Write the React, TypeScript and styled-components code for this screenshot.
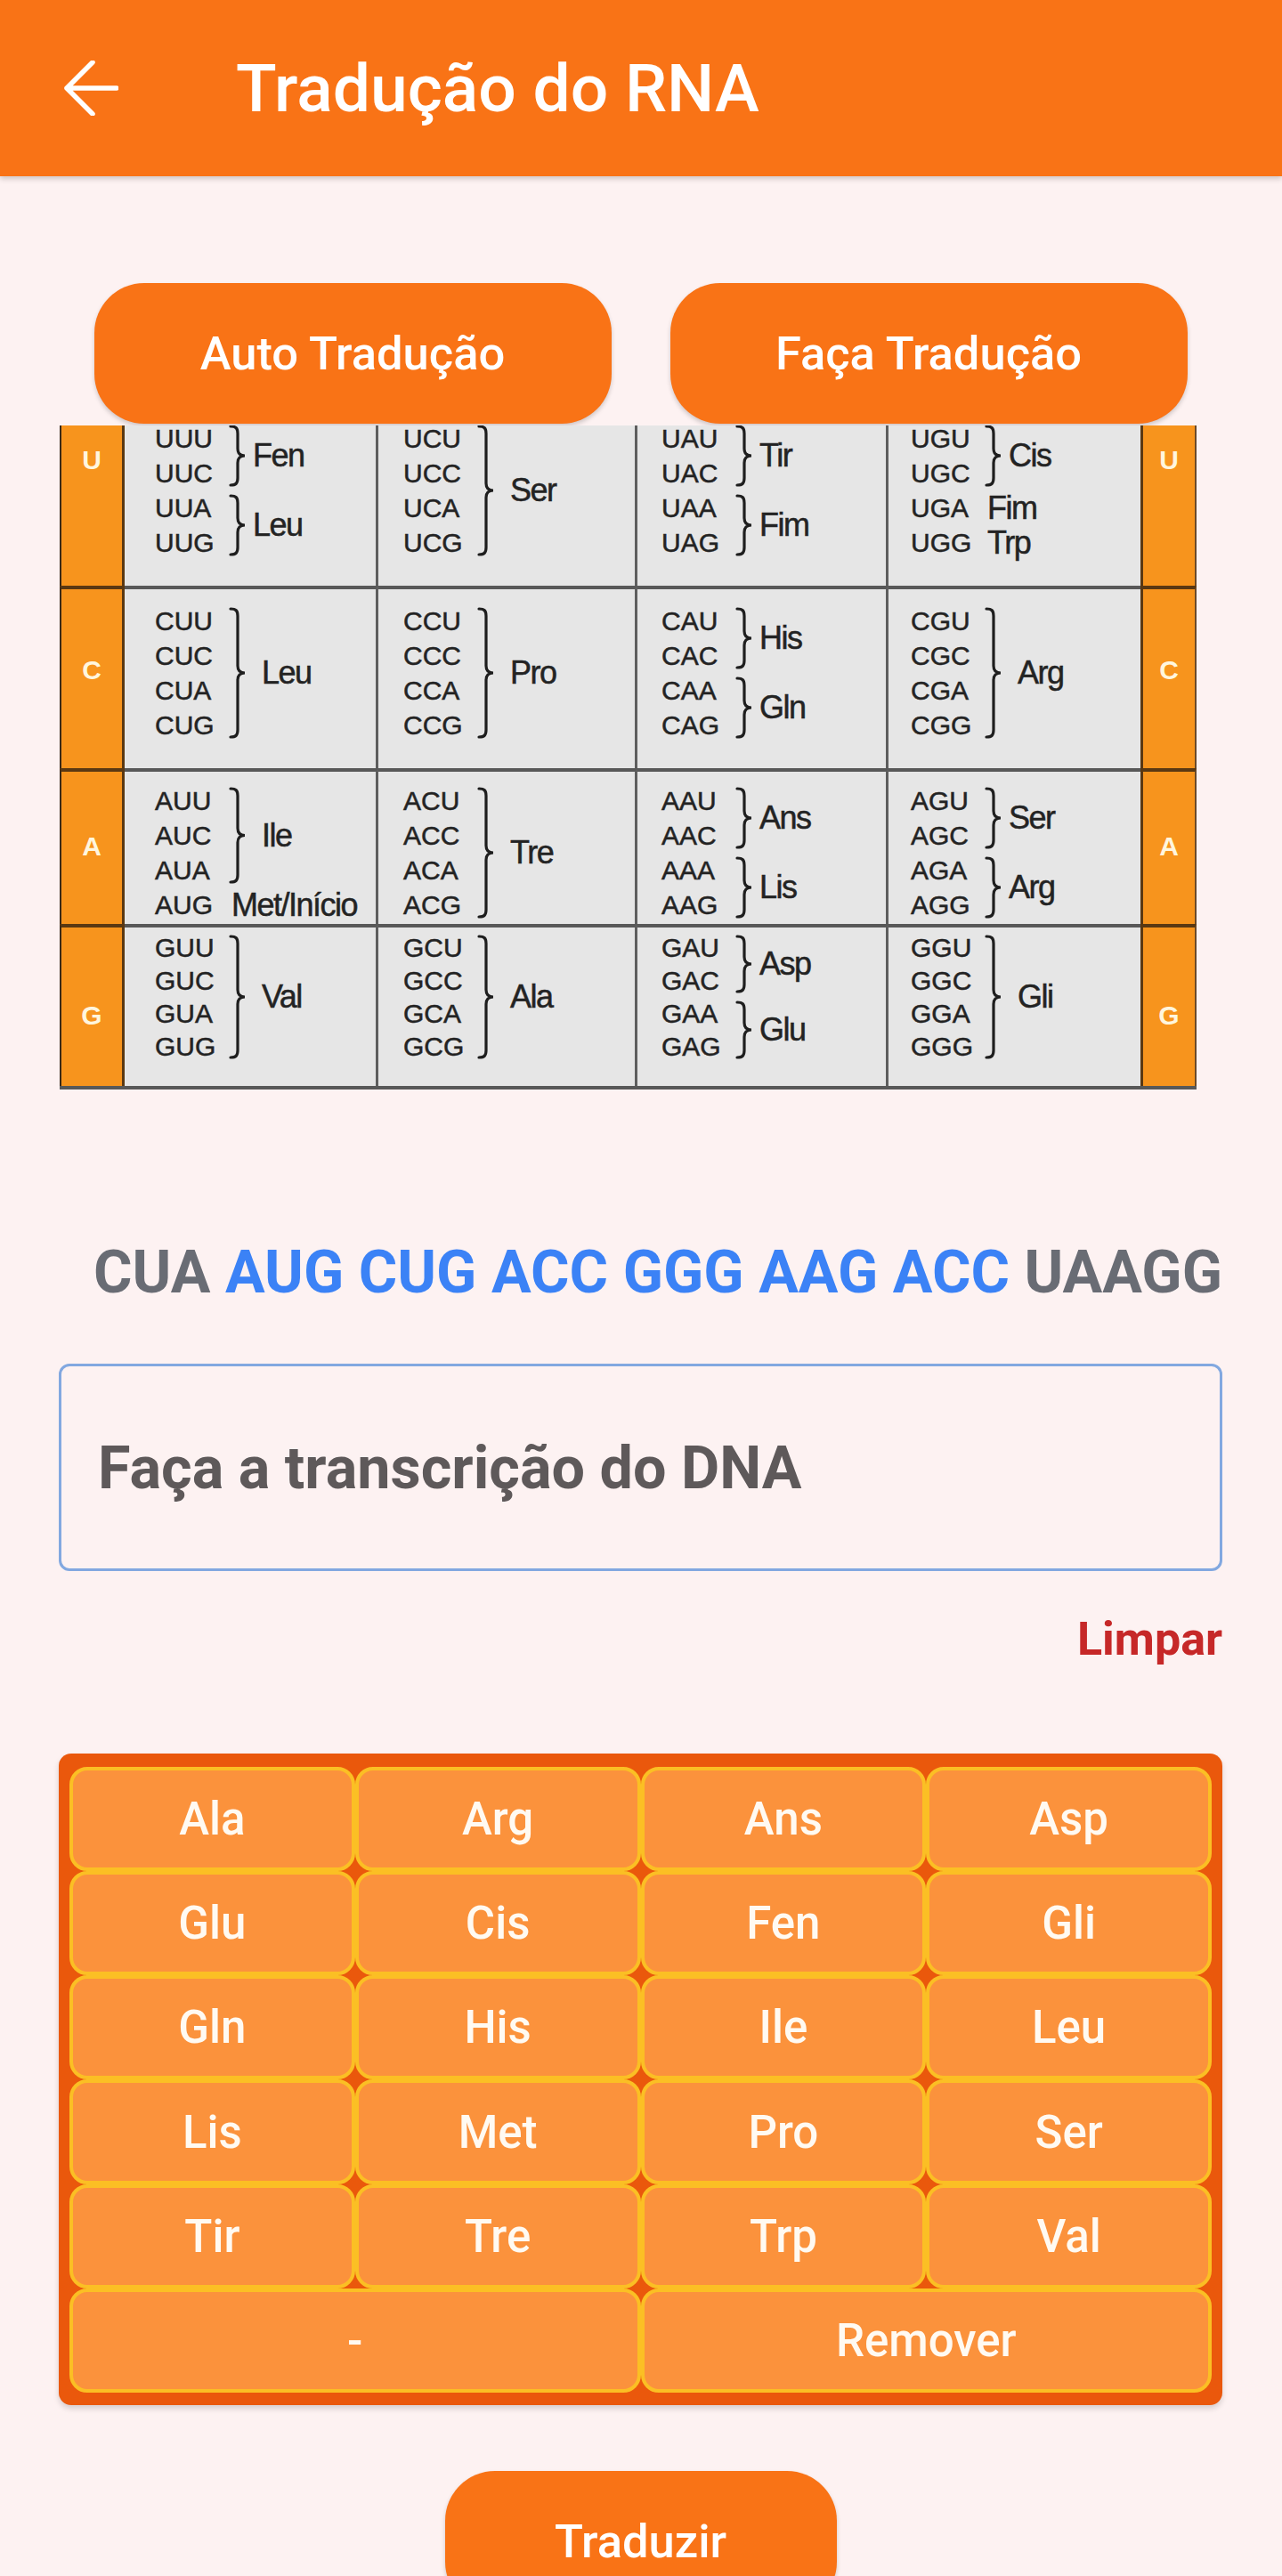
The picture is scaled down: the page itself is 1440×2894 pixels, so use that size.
import React from "react";
import styled, { createGlobalStyle } from "styled-components";

const GlobalStyle = createGlobalStyle`
  html, body { margin: 0; padding: 0; background: #fdf2f2; }
  body { font-family: Roboto, "Noto Sans", sans-serif; }
  * { box-sizing: border-box; }
`;

const Page = styled.div`
  background: #fdf2f2;
  min-height: 2894px;
  overflow: hidden;
`;

const Header = styled.header`
  position: relative;
  z-index: 2;
  height: 198px;
  background: #f97316;
  display: flex;
  align-items: center;
  padding-left: 71px;
  box-shadow: 0 3px 6px rgba(0, 0, 0, 0.18);
`;

const BackButton = styled.button`
  display: flex;
  width: 62px;
  height: 62px;
  padding: 0;
  border: 0;
  background: none;
  cursor: pointer;
`;

const Title = styled.h1`
  margin: 0 0 0 132px;
  font-family: Roboto, sans-serif;
  font-size: 75px;
  font-weight: 500;
  color: #ffffff;
`;

const Main = styled.main`
  display: flex;
  flex-direction: column;
  padding: 120px 67px 0 66px;
`;

const ActionRow = styled.div`
  display: flex;
  justify-content: center;
  gap: 66px;
`;

const PillButton = styled.button<{ $w: number }>`
  width: ${(p) => p.$w}px;
  height: 158px;
  border: 0;
  border-radius: 56px;
  background: #f97316;
  color: #ffffff;
  font-family: Roboto, sans-serif;
  font-size: 52.5px;
  font-weight: 500;
  box-shadow: 0 3px 5px rgba(0, 0, 0, 0.18);
  flex-shrink: 0;
`;

/* ---------- codon table ---------- */

const TableClip = styled.div`
  width: 1277px;
  height: 746px;
  margin: 2px 0 0 1px;
  overflow: hidden;
`;

const Table = styled.div`
  margin-top: -23px;
  font-family: "Liberation Sans", Arial, sans-serif;
  color: #232323;
  border-bottom: 4px solid #585858;
`;

const Row = styled.div<{ $h: number }>`
  display: grid;
  grid-template-columns: 73px 285px 291px 282px 283px 63px;
  height: ${(p) => p.$h}px;
`;

const Side = styled.div<{ $top: number; $first?: boolean; $right?: boolean }>`
  background: #f7941d;
  border-top: ${(p) => (p.$first ? "0" : "4px solid #5a3812")};
  border-left: ${(p) => (p.$right ? "3px solid #5a3812" : "2px solid #3a2a1a")};
  border-right: ${(p) => (p.$right ? "2px solid #6a4a2a" : "3px solid #5a3812")};
  padding-top: ${(p) => p.$top}px;
  text-align: center;
  color: #fff6de;
  font-weight: 700;
  font-size: 30px;
  line-height: 30px;
`;

const Cell = styled.div<{ $pad: number; $top: number; $first?: boolean; $last?: boolean }>`
  display: flex;
  flex-direction: column;
  background: #e6e6e6;
  border-top: ${(p) => (p.$first ? "0" : "4px solid #585858")};
  border-right: ${(p) => (p.$last ? "0" : "3px solid #5e5e5e")};
  padding: ${(p) => p.$top}px 0 0 ${(p) => p.$pad}px;
`;

const Group = styled.div`
  display: flex;
  align-items: center;
`;

const Codons = styled.div<{ $lh: number }>`
  width: 72px;
  font-size: 30px;
  line-height: ${(p) => p.$lh}px;
  white-space: nowrap;
  -webkit-text-stroke: 0.5px #232323;
`;

const BraceSvg = styled.svg`
  flex-shrink: 0;
  margin-left: 10px;
  display: block;
`;

const Amino = styled.span<{ $gap: number }>`
  margin-left: ${(p) => p.$gap}px;
  font-size: 36px;
  letter-spacing: -1.5px;
  line-height: 1;
  white-space: nowrap;
  -webkit-text-stroke: 0.5px #232323;
`;

const Brace = ({ h }: { h: number }) => {
  const m = h / 2;
  const d = `M3 2 C9 2 11 4 11 10 L11 ${m - 8} C11 ${m - 3} 13 ${m} 19 ${m} C13 ${m} 11 ${m + 3} 11 ${m + 8} L11 ${h - 10} C11 ${h - 4} 9 ${h - 2} 3 ${h - 2}`;
  return (
    <BraceSvg width={22} height={h} viewBox={`0 0 22 ${h}`}>
      <path d={d} fill="none" stroke="#1e1e1e" strokeWidth={3.2} strokeLinecap="round" />
    </BraceSvg>
  );
};

type G = { c: string[]; aa: string };
type RowDef = { base: string; h: number; top: number; lh: number; letterTop: number; cells: G[][] };

const rows: RowDef[] = [
  {
    base: "U", h: 203, top: 18, lh: 39, letterTop: 47,
    cells: [
      [{ c: ["UUU", "UUC"], aa: "Fen" }, { c: ["UUA", "UUG"], aa: "Leu" }],
      [{ c: ["UCU", "UCC", "UCA", "UCG"], aa: "Ser" }],
      [{ c: ["UAU", "UAC"], aa: "Tir" }, { c: ["UAA", "UAG"], aa: "Fim" }],
      [{ c: ["UGU", "UGC"], aa: "Cis" }, { c: ["UGA"], aa: "Fim" }, { c: ["UGG"], aa: "Trp" }],
    ],
  },
  {
    base: "C", h: 205, top: 16, lh: 39, letterTop: 76,
    cells: [
      [{ c: ["CUU", "CUC", "CUA", "CUG"], aa: "Leu" }],
      [{ c: ["CCU", "CCC", "CCA", "CCG"], aa: "Pro" }],
      [{ c: ["CAU", "CAC"], aa: "His" }, { c: ["CAA", "CAG"], aa: "Gln" }],
      [{ c: ["CGU", "CGC", "CGA", "CGG"], aa: "Arg" }],
    ],
  },
  {
    base: "A", h: 175, top: 13, lh: 39, letterTop: 69,
    cells: [
      [{ c: ["AUU", "AUC", "AUA"], aa: "Ile" }, { c: ["AUG"], aa: "Met/Início" }],
      [{ c: ["ACU", "ACC", "ACA", "ACG"], aa: "Tre" }],
      [{ c: ["AAU", "AAC"], aa: "Ans" }, { c: ["AAA", "AAG"], aa: "Lis" }],
      [{ c: ["AGU", "AGC"], aa: "Ser" }, { c: ["AGA", "AGG"], aa: "Arg" }],
    ],
  },
  {
    base: "G", h: 182, top: 4, lh: 37, letterTop: 84,
    cells: [
      [{ c: ["GUU", "GUC", "GUA", "GUG"], aa: "Val" }],
      [{ c: ["GCU", "GCC", "GCA", "GCG"], aa: "Ala" }],
      [{ c: ["GAU", "GAC"], aa: "Asp" }, { c: ["GAA", "GAG"], aa: "Glu" }],
      [{ c: ["GGU", "GGC", "GGA", "GGG"], aa: "Gli" }],
    ],
  },
];

const colPad = [34, 28, 27, 25];

const labelGap = (n: number) => (n === 1 ? 14 : n === 2 ? 6 : 16);

const CodonTable = () => (
  <TableClip>
    <Table>
      {rows.map((r, ri) => (
        <Row key={r.base} $h={r.h}>
          <Side $top={r.letterTop} $first={ri === 0}>{r.base}</Side>
          {r.cells.map((cell, ci) => (
            <Cell key={ci} $pad={colPad[ci]} $top={r.top} $first={ri === 0} $last={ci === 3}>
              {cell.map((g) => (
                <Group key={g.c[0]}>
                  <Codons $lh={r.lh}>
                    {g.c.map((c) => (
                      <div key={c}>{c}</div>
                    ))}
                  </Codons>
                  {g.c.length > 1 && <Brace h={g.c.length * r.lh - 8} />}
                  <Amino $gap={labelGap(g.c.length)}>{g.aa}</Amino>
                </Group>
              ))}
            </Cell>
          ))}
          <Side $top={r.letterTop} $first={ri === 0} $right>{r.base}</Side>
        </Row>
      ))}
    </Table>
  </TableClip>
);

/* ---------- sequence + input ---------- */

const Sequence = styled.p`
  margin: 166px 0 0;
  text-align: right;
  font-family: Roboto, sans-serif;
  font-size: 66.5px;
  font-weight: 700;
  line-height: 78px;
  color: #696c74;
  white-space: nowrap;
`;

const Codon = styled.span<{ $on?: boolean }>`
  color: ${(p) => (p.$on ? "#3b82f6" : "#696c74")};
`;

const TextInput = styled.input`
  margin-top: 64px;
  width: 100%;
  height: 233px;
  padding: 0 0 0 41px;
  border: 3px solid #82a8e0;
  border-radius: 12px;
  background: transparent;
  font-family: Roboto, sans-serif;
  font-size: 66.5px;
  font-weight: 700;
  color: #5e595a;
  outline: none;
  &::placeholder {
    color: #5e595a;
    opacity: 1;
  }
`;

const ClearButton = styled.button`
  align-self: flex-end;
  margin-top: 47px;
  padding: 0;
  border: 0;
  background: none;
  font-family: Roboto, sans-serif;
  font-size: 52px;
  font-weight: 700;
  line-height: 60px;
  color: #c62828;
`;

/* ---------- keypad ---------- */

const Panel = styled.div`
  margin-top: 98px;
  padding: 15px 12px 14px;
  background: #ea580c;
  border-radius: 14px;
  box-shadow: 0 4px 6px rgba(0, 0, 0, 0.15);
`;

const KeyGrid = styled.div`
  display: grid;
  grid-template-columns: repeat(4, 1fr);
  grid-template-rows: repeat(6, 1fr);
  height: 703px;
`;

const Key = styled.button<{ $span?: number }>`
  grid-column: span ${(p) => p.$span ?? 1};
  display: flex;
  align-items: center;
  justify-content: center;
  padding: 0;
  background: #fb923c;
  border: 4px solid #fbbf24;
  border-radius: 20px;
  color: #fffaf2;
  font-family: Roboto, sans-serif;
  font-size: 51px;
  font-weight: 500;
`;

const Translate = styled(PillButton)`
  align-self: center;
  margin-top: 74px;
`;

const keys = [
  "Ala", "Arg", "Ans", "Asp",
  "Glu", "Cis", "Fen", "Gli",
  "Gln", "His", "Ile", "Leu",
  "Lis", "Met", "Pro", "Ser",
  "Tir", "Tre", "Trp", "Val",
];

export default function App() {
  return (
    <Page>
      <GlobalStyle />
      <Header>
        <BackButton aria-label="Voltar">
          <svg width="62" height="62" viewBox="0 0 62 62">
            <path
              d="M60 31 H4 M33 2 L4 31 L33 60"
              fill="none"
              stroke="#ffffff"
              strokeWidth="5.5"
              strokeLinecap="round"
              strokeLinejoin="round"
            />
          </svg>
        </BackButton>
        <Title>Tradução do RNA</Title>
      </Header>
      <Main>
        <ActionRow>
          <PillButton $w={581}>Auto Tradução</PillButton>
          <PillButton $w={581}>Faça Tradução</PillButton>
        </ActionRow>
        <CodonTable />
        <Sequence>
          <Codon>CUA </Codon>
          <Codon $on>AUG CUG ACC GGG AAG ACC</Codon>
          <Codon> UAAGG</Codon>
        </Sequence>
        <TextInput placeholder="Faça a transcrição do DNA" />
        <ClearButton>Limpar</ClearButton>
        <Panel>
          <KeyGrid>
            {keys.map((k) => (
              <Key key={k}>{k}</Key>
            ))}
            <Key $span={2}>-</Key>
            <Key $span={2}>Remover</Key>
          </KeyGrid>
        </Panel>
        <Translate $w={440}>Traduzir</Translate>
      </Main>
    </Page>
  );
}
